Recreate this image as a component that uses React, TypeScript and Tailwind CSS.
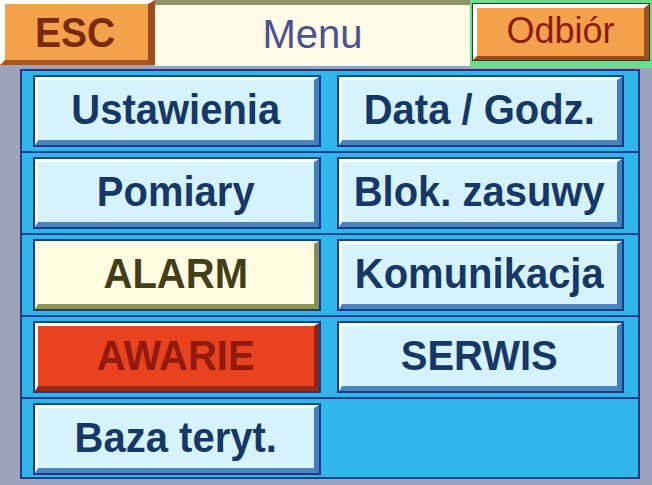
const font = "font-['Liberation_Sans',Arial,sans-serif]";

type Tone = "blue" | "alarm" | "fault";

const tones: Record<Tone, string> = {
  blue: "bg-[#d6f3fb] border-r-[#3f7fba] border-b-[#4a86bd] text-[#163868]",
  alarm: "bg-[#fffbe0] border-r-[#8c8a4e] border-b-[#93905a] text-[#433e18]",
  fault: "bg-[#e8421e] border-r-[#8e2412] border-b-[#992a14] text-[#921a0e]",
};

function MenuButton({ label, tone = "blue" }: { label: string; tone?: Tone }) {
  return (
    <div className="h-[68px] flex-1 outline-2 outline-[#1c3a86]">
      <div
        className={`h-full w-full flex items-center justify-center border-t-[3px] border-l-[3px] border-r-[5px] border-b-[5px] border-t-white border-l-white ${tones[tone]}`}
      >
        <span className="text-[40px] font-bold leading-none scale-y-[1.05] -mt-[2px]">{label}</span>
      </div>
    </div>
  );
}

const rows: Array<[{ label: string; tone?: Tone }, { label: string; tone?: Tone } | null]> = [
  [{ label: "Ustawienia" }, { label: "Data / Godz." }],
  [{ label: "Pomiary" }, { label: "Blok. zasuwy" }],
  [{ label: "ALARM", tone: "alarm" }, { label: "Komunikacja" }],
  [{ label: "AWARIE", tone: "fault" }, { label: "SERWIS" }],
  [{ label: "Baza teryt." }, null],
];

export default function App() {
  return (
    <div className={`w-[652px] h-[485px] bg-[#9da3bb] overflow-hidden flex flex-col ${font}`}>
      {/* top bar */}
      <div className="h-[68px] flex shrink-0">
        <div className="w-[155px] h-[65px] flex items-center justify-center bg-[#f4a14c] border-t-[4px] border-l-[5px] border-r-[7px] border-b-[5px] border-t-white border-l-white border-r-[#9c4e1c] border-b-[#a5561f]">
          <span className="text-[39px] font-bold leading-none text-[#7a2a0c] scale-y-[1.07] -ml-[3px]">ESC</span>
        </div>
        <div className="w-[315px] h-[66px] bg-[#fffbe6] border-t-[5px] border-[#8f9468] flex items-center justify-center">
          <span className="text-[40px] leading-none text-[#4b5292] -mt-[3px]">Menu</span>
        </div>
        <div className="flex-1 bg-[#6ade8a] pt-[3px] pl-[2px] pr-[2px] pb-[7px]">
          <div className="h-full border border-[#2a3a2a]">
            <div className="h-full flex items-center justify-center bg-[#f4a14c] border-t-[4px] border-l-[4px] border-r-[5px] border-b-[4px] border-t-white border-l-white border-r-[#a3521c] border-b-[#9a4c1a]">
              <span className="text-[36px] leading-none text-[#8c1d0c] -mt-[2px]">Odbiór</span>
            </div>
          </div>
        </div>
      </div>

      {/* menu panel */}
      <div className="pl-[20px] pt-[1px]">
        <div className="w-[620px] h-[410px] border-2 border-[#1c3a8e] bg-[#2fb6ea] flex flex-col">
          {rows.map(([left, right], i) => (
            <div
              key={i}
              className={`h-[80px] shrink-0 flex items-center gap-[20px] pl-[13px] pr-[16px] ${i < rows.length - 1 ? "border-b-2 border-[#1c3a8e] h-[82px]" : ""}`}
            >
              <MenuButton label={left.label} tone={left.tone} />
              {right ? <MenuButton label={right.label} tone={right.tone} /> : <div className="flex-1" />}
            </div>
          ))}
        </div>
      </div>
    </div>
  );
}
